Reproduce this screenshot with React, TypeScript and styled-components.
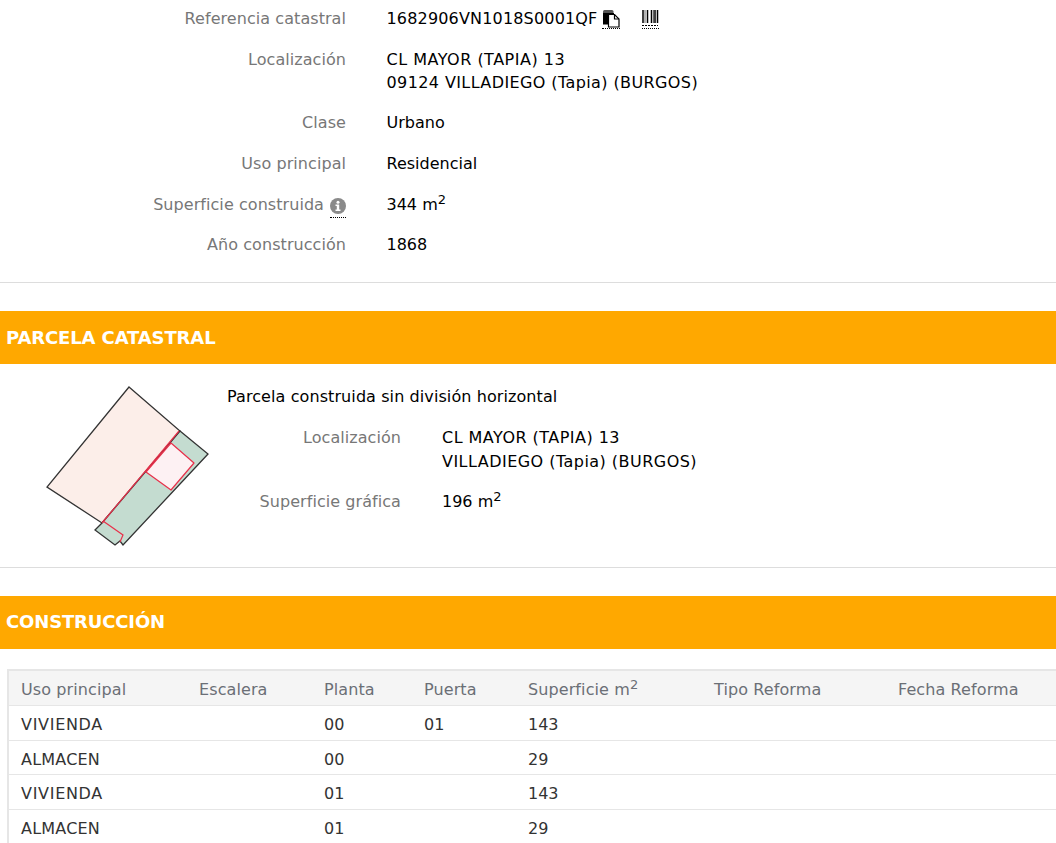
import React from "react";
import styled, { createGlobalStyle } from "styled-components";

const Global = createGlobalStyle`
  html, body { margin: 0; padding: 0; background: #fff; overflow: hidden; }
  body { font-family: "DejaVu Sans", Verdana, sans-serif; font-size: 16px; color: #000; }
`;
const Page = styled.div`
  width: 1056px; height: 843px; overflow: hidden; display: flex; flex-direction: column;
`;
const Summary = styled.section`
  height: 283px; box-sizing: border-box; border-bottom: 1px solid #ddd; padding-top: 7px;
  display: flex; flex-direction: column; flex: none;
`;
const Row = styled.div<{ $h: number; $labelW: number; $gap: number; $lh?: number }>`
  display: grid; grid-template-columns: ${p => p.$labelW}px 1fr; column-gap: ${p => p.$gap}px;
  height: ${p => p.$h}px; line-height: ${p => p.$lh ?? 23}px; flex: none;
`;
const Label = styled.div`
  color: #777; text-align: right; white-space: nowrap; letter-spacing: 0.06px;
`;
const Value = styled.div`
  white-space: nowrap;
  sup { font-size: 13px; line-height: 0; }
`;
const Wide = styled.span<{ $ls: number }>`
  letter-spacing: ${p => p.$ls}px;
`;
const IconLink = styled.span<{ $ml: number }>`
  display: inline-block; margin-left: ${p => p.$ml}px; border-bottom: 1px dotted #000; height: 18px; line-height: 0; vertical-align: -4px;
`;
const Info = styled.span`
  display: inline-block; margin-left: 6px; border-bottom: 1px dotted #000; height: 19px; line-height: 0; vertical-align: -4px;
`;
const Band = styled.h2<{ $mt: number; $ls: number; $lh: number }>`
  margin: ${p => p.$mt}px 0 0; height: 53px; flex: none; background: #ffa800; color: #fff; font-size: 18px; font-weight: 700;
  line-height: ${p => p.$lh}px; padding-left: 6px; letter-spacing: ${p => p.$ls}px; font-family: "DejaVu Sans", Verdana, sans-serif;
`;
const Parcel = styled.section`
  height: 204px; box-sizing: border-box; border-bottom: 1px solid #ddd; flex: none; display: flex;
`;
const Plot = styled.svg`
  width: 190px; height: 180px; margin: 11px 0 0 30px; flex: none;
`;
const ParcelBody = styled.div`
  margin-left: 6px; padding-top: 21px; display: flex; flex-direction: column;
`;
const Title = styled.div`
  line-height: 24px; height: 41px; letter-spacing: 0.09px; padding-left: 1px;
`;
const Table = styled.div`
  margin: 20px 0 0 7px; border: 2px solid #e6e6e6; border-bottom: 0; border-right: 0; flex: none; width: 1100px;
`;
const Tr = styled.div<{ $head?: boolean }>`
  display: grid; grid-template-columns: 178px 125px 100px 104px 186px 184px 1fr;
  box-sizing: border-box;
  height: ${p => p.$head ? 35 : 34.67}px;
  padding-top: ${p => p.$head ? 1 : 2}px;
  line-height: ${p => p.$head ? 35 : 34}px;
  background: ${p => p.$head ? "#f5f5f5" : "#fff"};
  color: ${p => p.$head ? "#6b6f76" : "#333"};
  border-bottom: 1px solid #e6e6e6;
  padding-left: 12px; white-space: nowrap; letter-spacing: ${p => p.$head ? 0.1 : 0}px;
  sup { font-size: 13px; line-height: 0; }
`;

const rows = [
  ["VIVIENDA", "00", "01", "143", 0.7],
  ["ALMACEN", "00", "", "29", 0.2],
  ["VIVIENDA", "01", "", "143", 0.7],
  ["ALMACEN", "01", "", "29", 0.2],
] as const;

export default function App() {
  return (
    <Page>
      <Global />
      <Summary>
        <Row $h={41} $labelW={346} $gap={40.5}>
          <Label>Referencia catastral</Label>
          <Value>
            <Wide $ls={0.17}>1682906VN1018S0001QF</Wide>
            <IconLink $ml={5}>
              <svg width="18" height="18" viewBox="0 0 18 18">
                <path d="M1 1.500Q1 0 2.500 0H10Q11.500 0 11.500 1.500V3H1z" fill="#555" />
                <path d="M1 3h11v11.500H1z" fill="#000" />
                <path d="M6.500 4.500h6l4.500 4.500v8H6.500z" fill="#fff" stroke="#000" strokeWidth="1.200" />
                <path d="M12.500 4.500V9H17" fill="none" stroke="#000" strokeWidth="1.200" />
              </svg>
            </IconLink>
            <IconLink $ml={22}>
              <svg width="17" height="18" viewBox="0 0 17 18">
                <path d="M1 0v13M5.500 0v13M9.500 0v13M13 0v13M15.500 0v13" stroke="#000" strokeWidth="1.500" />
                <path d="M3 0v13M11.500 0v13" stroke="#000" strokeWidth=".6" />
                <path d="M0 15.500h16" stroke="#000" strokeDasharray="2 1" />
              </svg>
            </IconLink>
          </Value>
        </Row>
        <Row $h={63} $labelW={346} $gap={40.5}>
          <Label>Localización</Label>
          <Value>
            <Wide $ls={0.5}>CL MAYOR (TAPIA) 13</Wide><br />
            <Wide $ls={0.4}>09124 VILLADIEGO (Tapia) (BURGOS)</Wide>
          </Value>
        </Row>
        <Row $h={41} $labelW={346} $gap={40.5}><Label>Clase</Label><Value>Urbano</Value></Row>
        <Row $h={41} $labelW={346} $gap={40.5}><Label>Uso principal</Label><Value>Residencial</Value></Row>
        <Row $h={40} $labelW={346} $gap={40.5}>
          <Label>
            Superficie construida
            <Info>
              <svg width="16" height="16" viewBox="0 0 16 16">
                <circle cx="8" cy="8" r="8" fill="#8a8a8a" />
                <circle cx="8" cy="4.200" r="1.500" fill="#fff" />
                <path d="M5.500 6.500h3.700v5h1.300v1.500h-5v-1.500h1.300V8H5.500z" fill="#fff" />
              </svg>
            </Info>
          </Label>
          <Value>344 m<sup>2</sup></Value>
        </Row>
        <Row $h={41} $labelW={346} $gap={40.5}><Label>Año construcción</Label><Value>1868</Value></Row>
      </Summary>
      <Band $mt={28} $ls={-0.12} $lh={53}>PARCELA CATASTRAL</Band>
      <Parcel>
        <Plot viewBox="0 0 190 180">
          <path d="M99 12L150 56L72 148L17 112Z" fill="#fceee9" stroke="#333" strokeWidth="1.300" />
          <path d="M150 56L178 79L93 170L90 166L85 170L65 155L72 148Z" fill="#c4dcd0" stroke="#333" strokeWidth="1.300" />
          <path d="M149 56L72 148" fill="none" stroke="#e8304a" strokeWidth="1.200" />
          <path d="M141 68L164 88L141 115L116 97Z" fill="#fdf1f3" stroke="#e8304a" strokeWidth="1.200" strokeLinejoin="round" />
          <path d="M73 146L93 160L90 167" fill="none" stroke="#e8304a" strokeWidth="1.200" />
        </Plot>
        <ParcelBody>
          <Title>Parcela construida sin división horizontal</Title>
          <Row $h={64} $labelW={175} $gap={41} $lh={24}>
            <Label>Localización</Label>
            <Value>
              <Wide $ls={0.47}>CL MAYOR (TAPIA) 13</Wide><br />
              <Wide $ls={0.47}>VILLADIEGO (Tapia) (BURGOS)</Wide>
            </Value>
          </Row>
          <Row $h={41} $labelW={175} $gap={41} $lh={24}>
            <Label>Superficie gráfica</Label>
            <Value>196 m<sup>2</sup></Value>
          </Row>
        </ParcelBody>
      </Parcel>
      <Band $mt={28} $ls={-0.15} $lh={51}>CONSTRUCCIÓN</Band>
      <Table>
        <Tr $head>
          <span>Uso principal</span><span>Escalera</span><span>Planta</span><span>Puerta</span>
          <span>Superficie m<sup>2</sup></span><span>Tipo Reforma</span><span>Fecha Reforma</span>
        </Tr>
        {rows.map((r, i) => (
          <Tr key={i}>
            <Wide $ls={r[4]}>{r[0]}</Wide><span></span><span>{r[1]}</span><span>{r[2]}</span><span>{r[3]}</span><span></span><span></span>
          </Tr>
        ))}
      </Table>
    </Page>
  );
}
